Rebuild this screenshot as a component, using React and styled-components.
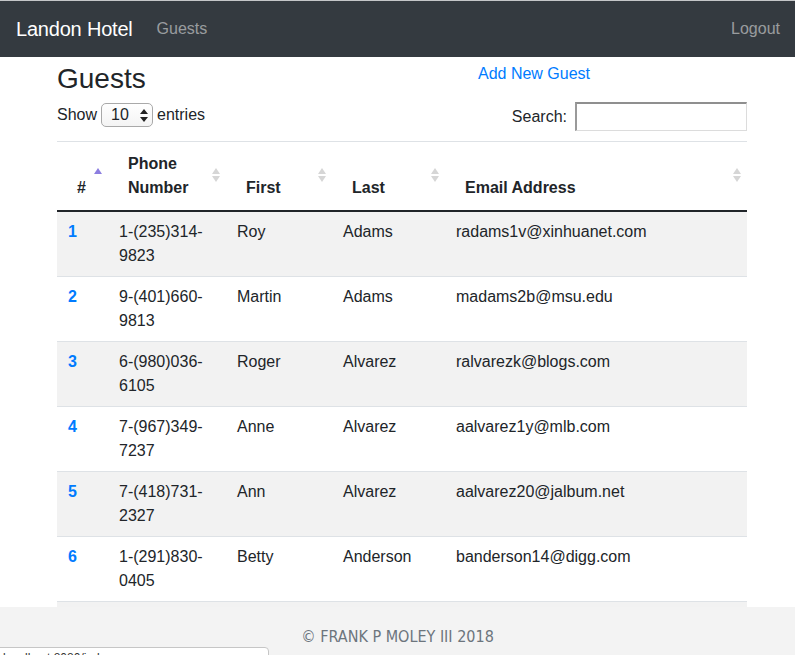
import React from "react";
import styled, { createGlobalStyle } from "styled-components";

const GlobalStyle = createGlobalStyle`
    body {
        margin: 0;
        font-family: "Liberation Sans", Arial, sans-serif;
        font-size: 16px;
        color: #212529;
        background: #ffffff;
    }
`
const Navbar = styled.nav`
    height: 56px;
    border-top: 1px solid #c4c6c8;
    background: #343a40;
    display: flex;
    align-items: center;
    justify-content: space-between;
    padding: 0 15px 0 16px;
`
const NavLeft = styled.div`
    display: flex;
    align-items: center;
`
const Brand = styled.a`
    font-size: 20px;
    color: #ffffff;
    margin-right: 16px;
    line-height: 30px;
    letter-spacing: -0.2px;
`
const NavLink = styled.a`
    font-size: 16px;
    color: rgba(255, 255, 255, 0.5);
    padding: 0 ${({edge}) => edge ? '0' : '8px'};
`
const Main = styled.main`
    width: 690px;
    margin-left: 57px;
`
const HeadRow = styled.div`
    display: grid;
    grid-template-columns: 421px auto;
    align-items: start;
    padding-top: 5px;
`
const Title = styled.h3`
    margin: 0;
    font-size: 28px;
    font-weight: 500;
    line-height: 34px;
`
const AddLink = styled.a`
    color: #007bff;
    line-height: 24px;
`
const Controls = styled.div`
    display: flex;
    justify-content: space-between;
    align-items: flex-start;
    margin-top: 4px;
`
const Length = styled.label`
    display: flex;
    align-items: center;
    gap: 4px;
    line-height: 24px;
    margin-top: 3px;
`
const Select = styled.div`
    height: 22px;
    border: 1px solid #a9a9a9;
    border-radius: 5px;
    background: linear-gradient(#ffffff, #f4f4f4);
    display: flex;
    align-items: center;
    justify-content: space-between;
    padding: 0 4px 0 9px;
    width: 37px;
    font-size: 16px;
`
const SearchBox = styled.label`
    display: flex;
    align-items: center;
    gap: 8px;
    margin-top: 2px;
`
const Input = styled.input`
    width: 169px;
    height: 26px;
    padding: 0;
    border-style: solid;
    border-color: #8f8f8f #dcdcdc #dcdcdc #9a9a9a;
    border-width: 2px 1px 1px 2px;
    box-sizing: content-box;
    background: #ffffff;
`
const Table = styled.table`
    width: 690px;
    margin-top: 10px;
    border-collapse: collapse;
    table-layout: fixed;
`
const Th = styled.th`
    position: relative;
    box-sizing: border-box;
    width: ${({w}) => w}px;
    text-align: left;
    vertical-align: bottom;
    font-weight: bold;
    line-height: 24px;
    padding: 10px 24px 10px 20px;
    border-top: 1px solid #dee2e6;
    border-bottom: 2px solid #212529;
`
const Sort = styled.span`
    position: absolute;
    right: 6px;
    top: 26px;
    display: flex;
    flex-direction: column;
    gap: 2px;
`
const Tri = styled.span`
    width: 0;
    height: 0;
    border-left: 4px solid transparent;
    border-right: 4px solid transparent;
    ${({down, color}) => down
        ? `border-top: 6px solid ${color};`
        : `border-bottom: 6px solid ${color};`}
`
const Row = styled.tr`
    background: ${({odd}) => odd ? '#f2f2f2' : '#ffffff'};
`
const Td = styled.td`
    box-sizing: border-box;
    vertical-align: top;
    line-height: 24px;
    padding: 8px 12px 8px 11px;
    border-top: 1px solid #dee2e6;
`
const IdLink = styled.a`
    color: #007bff;
    font-weight: bold;
`
const Footer = styled.footer`
    position: fixed;
    left: 0;
    right: 0;
    bottom: 0;
    height: 48px;
    background: #f3f3f3;
    color: #6c757d;
    text-align: center;
    line-height: 24px;
    padding-top: 18px;
    box-sizing: border-box;
    font-family: "Liberation Sans Narrow", "DejaVu Sans Condensed", "Liberation Sans", sans-serif;
    font-stretch: condensed;
    font-size: 16px;
`
const Status = styled.div`
    position: fixed;
    left: -1px;
    bottom: -14px;
    width: 265px;
    height: 20px;
    background: #ffffff;
    border: 1px solid #c6c6c6;
    border-top-right-radius: 4px;
    font-size: 12px;
    line-height: 20px;
    padding-left: 3px;
    color: #333;
`

const guests = [
    ["1", "1-(235)314-9823", "Roy", "Adams", "radams1v@xinhuanet.com"],
    ["2", "9-(401)660-9813", "Martin", "Adams", "madams2b@msu.edu"],
    ["3", "6-(980)036-6105", "Roger", "Alvarez", "ralvarezk@blogs.com"],
    ["4", "7-(967)349-7237", "Anne", "Alvarez", "aalvarez1y@mlb.com"],
    ["5", "7-(418)731-2327", "Ann", "Alvarez", "aalvarez20@jalbum.net"],
    ["6", "1-(291)830-0405", "Betty", "Anderson", "banderson14@digg.com"],
    ["7", "3-(512)447-2081", "Carl", "Armstrong", "carmstrong3@usda.gov"],
]

const columns = [
    { label: "#", w: 51, active: true },
    { label: "Phone Number", w: 118 },
    { label: "First", w: 106 },
    { label: "Last", w: 113 },
    { label: "Email Address", w: 302 },
]

const SortIcon = ({active}) => (
    active
        ? <Sort><Tri color="#8c7ee0" /></Sort>
        : <Sort><Tri color="#d6d6d6" /><Tri down color="#d6d6d6" /></Sort>
)

export default function App() {
    return (
        <>
            <GlobalStyle />
            <Navbar>
                <NavLeft>
                    <Brand>Landon Hotel</Brand>
                    <NavLink>Guests</NavLink>
                </NavLeft>
                <NavLink edge>Logout</NavLink>
            </Navbar>
            <Main>
                <HeadRow>
                    <Title>Guests</Title>
                    <AddLink>Add New Guest</AddLink>
                </HeadRow>
                <Controls>
                    <Length>
                        Show
                        <Select>
                            <span>10</span>
                            <svg width="8" height="13" viewBox="0 0 8 13">
                                <path d="M4 0 L8 5 L0 5 Z M4 13 L8 8 L0 8 Z" fill="#222" />
                            </svg>
                        </Select>
                        entries
                    </Length>
                    <SearchBox>
                        Search:
                        <Input type="search" />
                    </SearchBox>
                </Controls>
                <Table>
                    <thead>
                        <tr>
                            {columns.map((c) => (
                                <Th key={c.label} w={c.w}>
                                    {c.label}
                                    <SortIcon active={c.active} />
                                </Th>
                            ))}
                        </tr>
                    </thead>
                    <tbody>
                        {guests.map((g, i) => (
                            <Row key={g[0]} odd={i % 2 === 0}>
                                <Td><IdLink>{g[0]}</IdLink></Td>
                                <Td>{g[1]}</Td>
                                <Td>{g[2]}</Td>
                                <Td>{g[3]}</Td>
                                <Td>{g[4]}</Td>
                            </Row>
                        ))}
                    </tbody>
                </Table>
            </Main>
            <Footer>© FRANK P MOLEY III 2018</Footer>
            <Status>localhost:8080/index</Status>
        </>
    )
}
